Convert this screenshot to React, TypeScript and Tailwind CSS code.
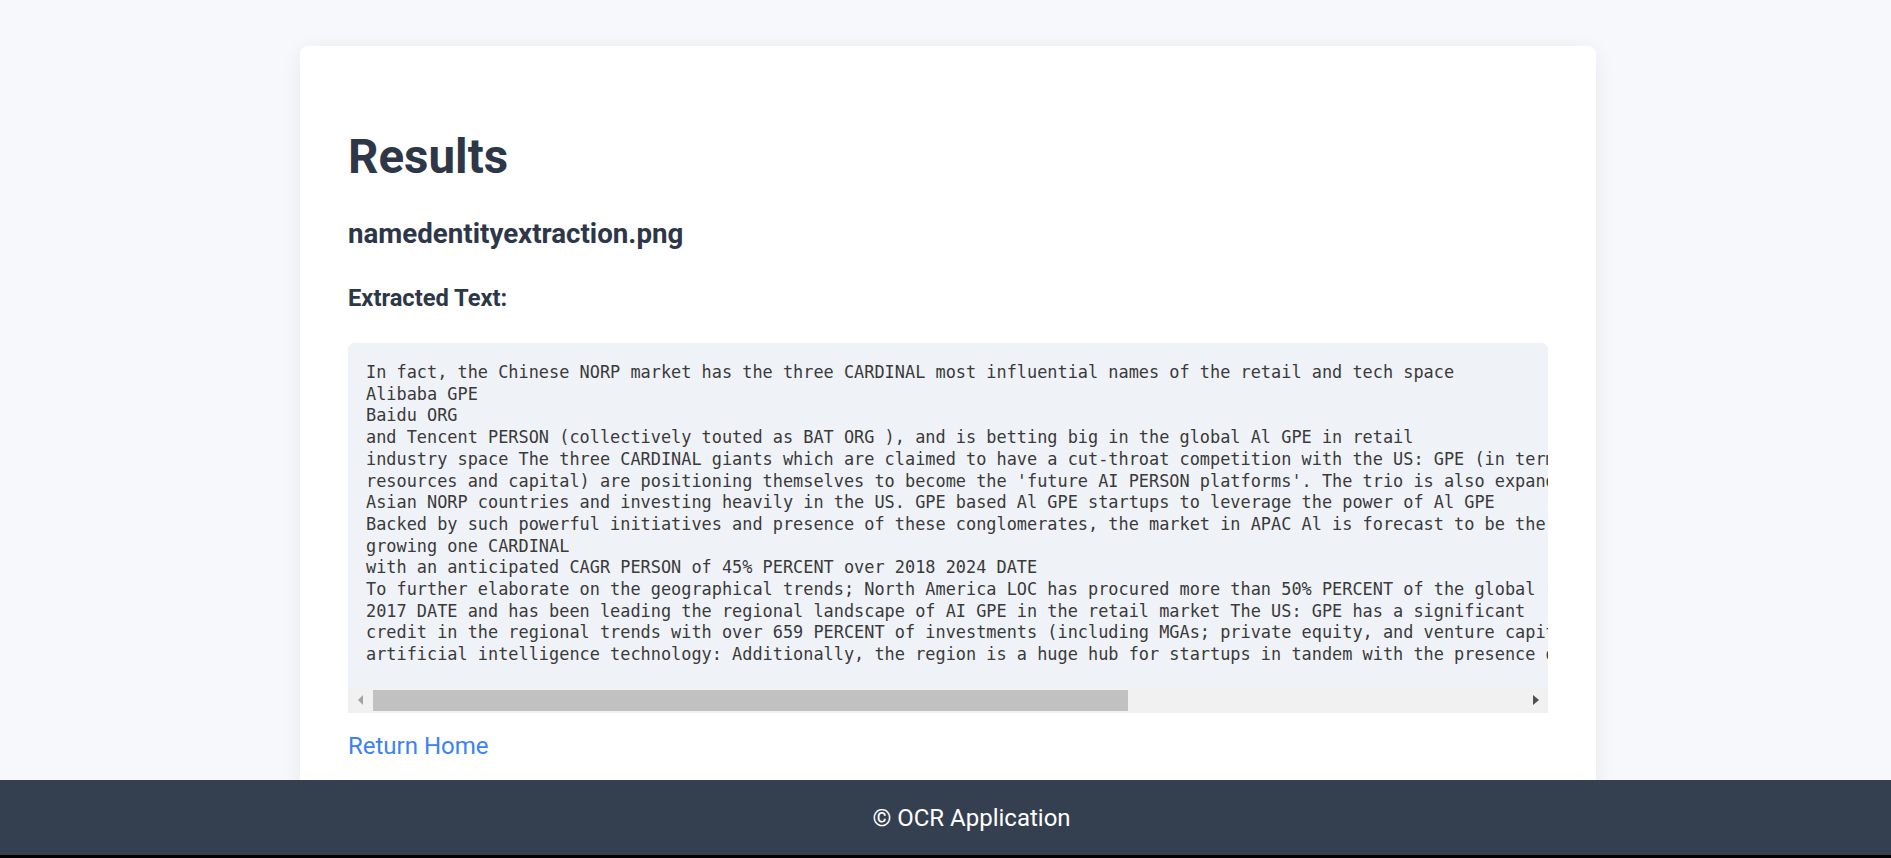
import React from "react";

const lines = [
  "In fact, the Chinese NORP market has the three CARDINAL most influential names of the retail and tech space",
  "Alibaba GPE",
  "Baidu ORG",
  "and Tencent PERSON (collectively touted as BAT ORG ), and is betting big in the global Al GPE in retail",
  "industry space The three CARDINAL giants which are claimed to have a cut-throat competition with the US: GPE (in terms of",
  "resources and capital) are positioning themselves to become the 'future AI PERSON platforms'. The trio is also expanding in other",
  "Asian NORP countries and investing heavily in the US. GPE based Al GPE startups to leverage the power of Al GPE",
  "Backed by such powerful initiatives and presence of these conglomerates, the market in APAC Al is forecast to be the fastest-",
  "growing one CARDINAL",
  "with an anticipated CAGR PERSON of 45% PERCENT over 2018 2024 DATE",
  "To further elaborate on the geographical trends; North America LOC has procured more than 50% PERCENT of the global revenue share in",
  "2017 DATE and has been leading the regional landscape of AI GPE in the retail market The US: GPE has a significant",
  "credit in the regional trends with over 659 PERCENT of investments (including MGAs; private equity, and venture capital) in",
  "artificial intelligence technology: Additionally, the region is a huge hub for startups in tandem with the presence of",
];

export default function App() {
  return (
    <div className="min-h-[858px] bg-[#f7f8fc] pt-[46px] pb-[120px] font-['Roboto',sans-serif]">
      <div className="ml-[300px] w-[1296px] rounded-lg bg-white px-[48px] pt-[82px] pb-[60px] shadow-[0_4px_20px_rgba(0,0,0,0.07)]">
        <h1 className="text-[47.5px] leading-[58px] font-bold text-[#2d3748]">Results</h1>
        <h2 className="mt-[31px] text-[27.7px] leading-[34px] font-bold text-[#2d3748]">namedentityextraction.png</h2>
        <h3 className="mt-[32px] text-[23.7px] leading-[30px] font-bold text-[#2d3748]">Extracted Text:</h3>
        <div className="mt-[30px] w-[1200px] overflow-hidden rounded-t-md bg-[#eff2f7]">
          <pre className="overflow-hidden whitespace-pre pt-[19px] pb-[22px] pl-[18px] font-['DejaVu_Sans_Mono',monospace] text-[16.9px] leading-[21.7px] text-[#3a3a3a]">
            {lines.join("\n")}
          </pre>
          <div className="flex h-[25px] items-center bg-[#f1f1f1]">
            <div className="flex w-[25px] items-center justify-center">
              <svg width="6" height="10" viewBox="0 0 6 10"><path d="M5 0 L0 5 L5 10 Z" fill="#a3a3a3" /></svg>
            </div>
            <div className="h-[21px] w-[755px] bg-[#c1c1c1]" />
            <div className="flex-1" />
            <div className="flex w-[25px] items-center justify-center">
              <svg width="6" height="10" viewBox="0 0 6 10"><path d="M0 0 L6 5 L0 10 Z" fill="#505050" /></svg>
            </div>
          </div>
        </div>
        <a href="#" className="mt-[18px] block text-[24px] leading-[30px] text-[#3b82f6]">Return Home</a>
      </div>
      <footer className="fixed bottom-0 left-0 right-0 flex h-[78px] items-center justify-center border-b-[3px] border-black bg-[#343f50] pl-[52px] text-[24px] text-white">
        © OCR Application
      </footer>
    </div>
  );
}
